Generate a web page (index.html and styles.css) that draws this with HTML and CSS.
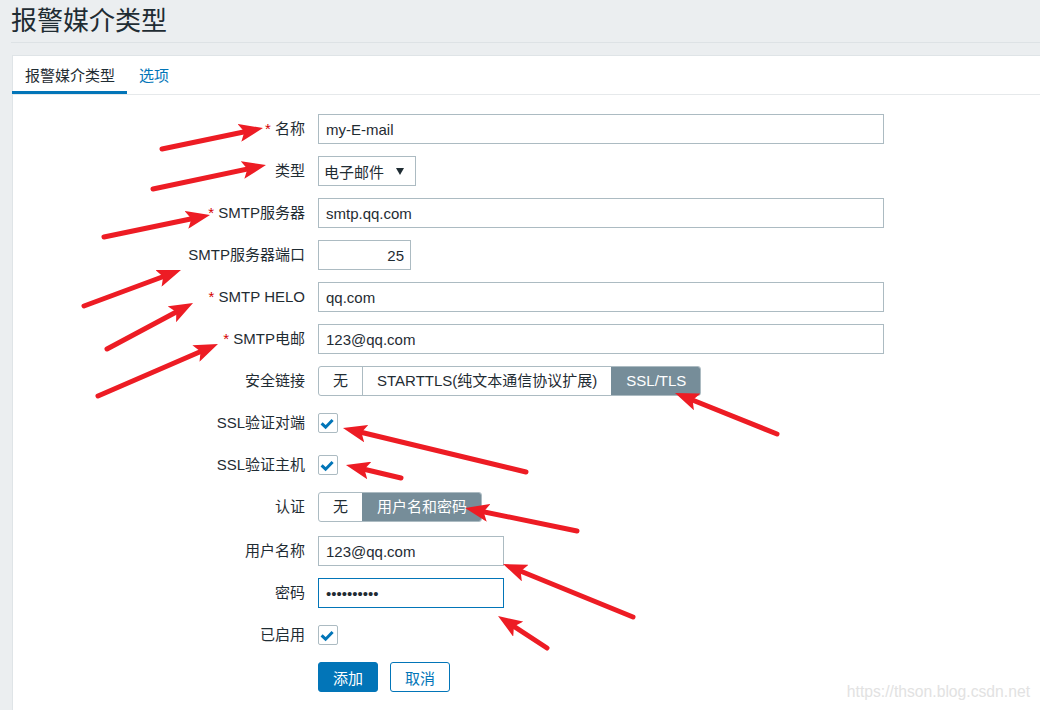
FILE: index.html
```html
<!DOCTYPE html>
<html lang="zh-CN">
<head>
<meta charset="utf-8">
<title>报警媒介类型</title>
<link rel="stylesheet" href="styles.css">
</head>
<body>
<header class="page-header"><h1 class="page-title">报警媒介类型</h1></header>
<main class="panel">
  <ul class="tabs">
    <li class="tab tab-active">报警媒介类型</li>
    <li class="tab tab-link">选项</li>
  </ul>
  <form class="form">
    <div class="row"><label class="lbl"><span class="req">*</span> 名称</label><input class="field field-wide" value="my-E-mail"></div>
    <div class="row"><label class="lbl">类型</label>
      <div class="select"><span>电子邮件</span><svg class="caret" width="8" height="7" viewBox="0 0 8 7"><polygon points="0,0 8,0 4,7" fill="#1f2c33"/></svg></div>
    </div>
    <div class="row"><label class="lbl"><span class="req">*</span> SMTP服务器</label><input class="field field-wide" value="smtp.qq.com"></div>
    <div class="row"><label class="lbl">SMTP服务器端口</label><input class="field field-port" value="25"></div>
    <div class="row"><label class="lbl"><span class="req">*</span> SMTP HELO</label><input class="field field-wide" value="qq.com"></div>
    <div class="row"><label class="lbl"><span class="req">*</span> SMTP电邮</label><input class="field field-wide" value="123@qq.com"></div>
    <div class="row"><label class="lbl">安全链接</label>
      <div class="seg"><span class="seg-item">无</span><span class="seg-item">STARTTLS(纯文本通信协议扩展)</span><span class="seg-item seg-on">SSL/TLS</span></div>
    </div>
    <div class="row"><label class="lbl">SSL验证对端</label><span class="check"><svg width="20" height="20" viewBox="0 0 20 20"><polyline points="3.6,10.4 7.6,14.2 14.6,7" fill="none" stroke="#0275b8" stroke-width="3"/></svg></span></div>
    <div class="row"><label class="lbl">SSL验证主机</label><span class="check"><svg width="20" height="20" viewBox="0 0 20 20"><polyline points="3.6,10.4 7.6,14.2 14.6,7" fill="none" stroke="#0275b8" stroke-width="3"/></svg></span></div>
    <div class="row"><label class="lbl">认证</label>
      <div class="seg"><span class="seg-item">无</span><span class="seg-item seg-on">用户名和密码</span></div>
    </div>
    <div class="row row-shift"><label class="lbl">用户名称</label><input class="field field-mid" value="123@qq.com"></div>
    <div class="row"><label class="lbl">密码</label><input class="field field-mid field-focus" value="••••••••••"></div>
    <div class="row"><label class="lbl">已启用</label><span class="check"><svg width="20" height="20" viewBox="0 0 20 20"><polyline points="3.6,10.4 7.6,14.2 14.6,7" fill="none" stroke="#0275b8" stroke-width="3"/></svg></span></div>
    <div class="row"><span class="lbl"></span>
      <div class="buttons"><button type="button" class="btn btn-primary">添加</button><button type="button" class="btn btn-alt">取消</button></div>
    </div>
  </form>
</main>
<svg class="arrows" width="1040" height="710" viewBox="0 0 1040 710">
  <defs>
    <marker id="ah" markerUnits="userSpaceOnUse" markerWidth="24" markerHeight="18" viewBox="0 0 24 18" refX="14" refY="9" orient="auto">
      <path d="M0,0 L24,9 L0,18 L5,9 z" fill="#ed1c24"/>
    </marker>
  </defs>
  <g stroke="#ed1c24" stroke-width="5" stroke-linecap="round" marker-end="url(#ah)">
    <line x1="162" y1="149" x2="253.2" y2="130"/>
    <line x1="153" y1="189" x2="256.2" y2="167.1"/>
    <line x1="104" y1="237" x2="200.2" y2="217"/>
    <line x1="84" y1="306" x2="171.6" y2="273.5"/>
    <line x1="107" y1="349" x2="184.2" y2="307.7"/>
    <line x1="98" y1="396" x2="208.8" y2="348"/>
    <line x1="777" y1="434" x2="684.3" y2="396.7"/>
    <line x1="526" y1="472" x2="352.7" y2="430.3"/>
    <line x1="401" y1="478" x2="355.7" y2="467.3"/>
    <line x1="577" y1="531" x2="474.8" y2="510"/>
    <line x1="633" y1="617" x2="512.3" y2="567.8"/>
    <line x1="547" y1="648" x2="506.4" y2="621.5"/>
  </g>
</svg>
<div class="watermark">https://thson.blog.csdn.net</div>
</body>
</html>
```
FILE: styles.css
```css
html, body {
  margin: 0;
  padding: 0;
}
body {
  background: #ebeef0;
  font-family: "Liberation Sans", "Noto Sans CJK SC", sans-serif;
  font-size: 15px;
  color: #1f2c33;
  width: 1040px;
  height: 710px;
  overflow: hidden;
  position: relative;
}
.page-header {
  margin-left: 11px;
  border-bottom: 1px solid #dde2e5;
}
.page-title {
  margin: 0;
  padding: 6px 0 6px 0;
  font-size: 26px;
  line-height: 30px;
  font-weight: normal;
  color: #1f2c33;
}
.panel {
  box-sizing: border-box;
  margin: 12px 0 0 12px;
  background: #fff;
  border: 1px solid #dfe4e7;
  border-right: 0;
  border-bottom: 0;
  height: 655px;
}
.tabs {
  display: flex;
  list-style: none;
  margin: 0;
  padding: 0;
  border-bottom: 1px solid #e6e9eb;
}
.tab {
  padding: 10px 12px 5px;
  line-height: 20px;
  border-bottom: 3px solid transparent;
}
.tab-active {
  color: #1f2c33;
  border-bottom-color: #0275b8;
  margin-left: -1px;
  padding-left: 13px;
}
.tab-link {
  color: #0275b8;
}
.form {
  display: flex;
  flex-direction: column;
  gap: 12px;
  padding-top: 19px;
}
.row {
  display: flex;
  align-items: center;
  gap: 13px;
  height: 30px;
}
.row-shift {
  margin-top: 2px;
}
.lbl {
  width: 292px;
  flex: none;
  text-align: right;
  line-height: 30px;
  color: #1f2c33;
}
.req {
  color: #d40000;
}
.field {
  box-sizing: border-box;
  height: 30px;
  border: 1px solid #acbbc2;
  background: #fff;
  padding: 0 7px;
  margin: 0;
  font-family: "Liberation Sans", "Noto Sans CJK SC", sans-serif;
  font-size: 15px;
  color: #1f2c33;
  outline: none;
  border-radius: 0;
}
.field-wide {
  width: 566px;
}
.field-mid {
  width: 186px;
}
.field-port {
  width: 93px;
  text-align: right;
  padding-right: 6px;
}
.field-focus {
  border-color: #0275b8;
}
.select {
  box-sizing: border-box;
  width: 98px;
  height: 30px;
  border: 1px solid #acbbc2;
  display: flex;
  align-items: center;
  justify-content: space-between;
  padding: 0 11px 0 5px;
}
.caret {
  display: block;
}
.seg {
  display: flex;
  box-sizing: border-box;
  height: 30px;
  border: 1px solid #acbbc2;
  border-radius: 3px;
  overflow: hidden;
}
.seg-item {
  padding: 0 14px;
  line-height: 28px;
  border-left: 1px solid #acbbc2;
  white-space: nowrap;
}
.seg-item:first-child {
  border-left: 0;
}
.seg-on {
  background: #768d99;
  color: #fff;
  border-left-color: #768d99;
}
.check {
  box-sizing: border-box;
  width: 20px;
  height: 20px;
  border: 1px solid #acbbc2;
  border-radius: 2px;
  background: #fff;
  display: flex;
  align-items: center;
  justify-content: center;
}
.check svg {
  display: block;
  flex: none;
}
.buttons {
  display: flex;
  gap: 12px;
}
.btn {
  box-sizing: border-box;
  width: 60px;
  height: 30px;
  border-radius: 3px;
  font-family: "Liberation Sans", "Noto Sans CJK SC", sans-serif;
  font-size: 15px;
  padding: 0;
  cursor: pointer;
}
.btn-primary {
  background: #0275b8;
  border: 1px solid #0275b8;
  color: #fff;
}
.btn-alt {
  background: #fff;
  border: 1px solid #0275b8;
  color: #0275b8;
}
.arrows {
  position: absolute;
  left: 0;
  top: 0;
  pointer-events: none;
}
.watermark {
  position: absolute;
  right: 10px;
  bottom: 9px;
  font-size: 15.7px;
  line-height: 18px;
  color: #e2e2e2;
  font-family: "Liberation Sans", sans-serif;
}
```
